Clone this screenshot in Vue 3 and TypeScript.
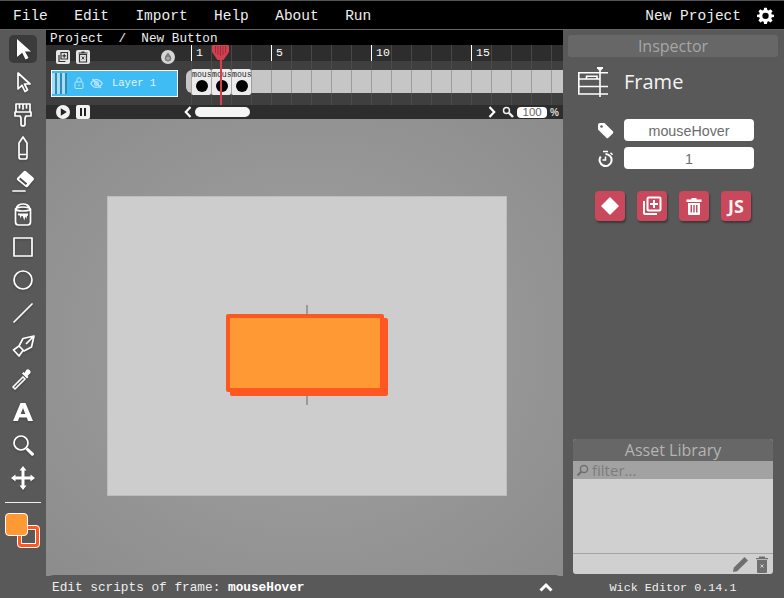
<template>
  <div class="editor">
    <header class="menubar">
      <nav class="menu">
        <span v-for="item in menuItems" :key="item">{{ item }}</span>
      </nav>
      <div class="project">
        <span>New Project</span>
        <svg width="17" height="17" viewBox="0 0 24 24">
          <path fill="#fff" fill-rule="evenodd" d="M10 1h4l.6 3.2 1.900.8 2.700-1.900 2.800 2.800-1.900 2.700.8 1.900L24 11v3l-3.100.6-.8 1.900 1.900 2.700-2.800 2.800-2.700-1.900-1.900.8L14 23.900h-4l-.6-3.100-1.900-.8-2.700 1.900-2.800-2.800 1.900-2.700-.8-1.900L0 14v-3l3.100-.5.8-1.900-1.900-2.700 2.800-2.800 2.700 1.900 1.900-.8zM12 8a4.500 4.500 0 1 0 0 9 4.500 4.500 0 0 0 0-9z" />
        </svg>
      </div>
    </header>

    <div class="workspace">
      <aside class="toolbar">
        <button v-for="tool in tools" :key="tool.name" class="tool" :class="{ active: tool.name === 'cursor' }">
          <svg width="26" height="26" viewBox="0 0 26 26" fill="none" stroke="#fff" stroke-width="1.700" stroke-linejoin="round" stroke-linecap="round">
            <path v-for="(d, i) in tool.outline" :key="i" :d="d" />
            <path v-for="(d, i) in tool.solid" :key="'s' + i" :d="d" fill="#fff" stroke="none" fill-rule="evenodd" />
          </svg>
        </button>
        <div class="tool-divider"></div>
        <div class="swatches">
          <div class="swatch stroke"></div>
          <div class="swatch fill"></div>
        </div>
      </aside>

      <main class="center">
        <div class="breadcrumb">Project&nbsp;&nbsp;/&nbsp;&nbsp;New Button</div>
        <section class="timeline">
          <div class="layers">
            <div class="layer-actions">
              <svg width="14" height="14" viewBox="0 0 14 14">
                <rect width="14" height="14" rx="2" fill="#e6e6e6" />
                <path d="M5 2.500h6.500V9H5zM3 5v6.500h6.500" fill="none" stroke="#333" stroke-width="1.200" />
                <path d="M8.200 3.800v4M6.300 5.800h3.800" stroke="#333" stroke-width="1.200" />
              </svg>
              <svg width="14" height="14" viewBox="0 0 14 14">
                <rect width="14" height="14" rx="2" fill="#e6e6e6" />
                <path d="M3.500 4.500h7V12h-7zM2.500 3h9M5.500 2h3" fill="none" stroke="#333" stroke-width="1.200" />
                <path d="M5.800 6.500l2.400 3M8.200 6.500l-2.400 3" stroke="#333" stroke-width="1" />
              </svg>
              <svg class="onion" width="14" height="14" viewBox="0 0 14 14">
                <circle cx="7" cy="7" r="7" fill="#d6d6d6" />
                <path d="M7 2.500c1.600 2.200 3.300 3.800 3.300 5.800a3.300 3.300 0 0 1-6.600 0c0-2 1.700-3.600 3.300-5.800z" fill="#7d7d7d" />
                <circle cx="7" cy="8.500" r="1.800" fill="#a8a8a8" />
              </svg>
            </div>
            <div class="layer-row">
              <div class="layer">
                <span class="grip"><i></i><i></i><i></i></span>
                <svg width="10" height="12" viewBox="0 0 10 12" fill="none" stroke="#b9e6fb" stroke-width="1">
                  <rect x="1" y="5" width="8" height="6.500" rx="1" />
                  <path d="M2.800 5V3a2.200 2.200 0 0 1 4.400 0v2M5 7.500v1.500" />
                </svg>
                <svg width="13" height="11" viewBox="0 0 13 11" fill="none" stroke="#b9e6fb" stroke-width="1.300">
                  <path d="M.8 5.500C2.500 2.800 4.300 1.600 6.500 1.600s4 1.200 5.700 3.900c-1.700 2.700-3.500 3.900-5.700 3.900S2.500 8.200.8 5.500z" />
                  <circle cx="6.500" cy="5.500" r="1.800" />
                  <path d="M2.500 1l8.500 9" />
                </svg>
                <span class="layer-name">Layer 1</span>
              </div>
            </div>
            <div class="transport">
              <svg width="14" height="14" viewBox="0 0 14 14">
                <circle cx="7" cy="7" r="7" fill="#f2f2f2" />
                <path d="M4.800 3.300L10.800 7l-6 3.700z" fill="#222" />
              </svg>
              <svg width="14" height="14" viewBox="0 0 14 14">
                <rect width="14" height="14" rx="2" fill="#f2f2f2" />
                <path d="M4 3h2v8H4zM8 3h2v8H8z" fill="#222" />
              </svg>
            </div>
          </div>

          <div class="frames">
            <div class="ruler">
              <span v-for="n in cellCount" :key="n" class="tick" :class="{ major: n === 1 || n % 5 === 0 }">
                <b v-if="n === 1 || n % 5 === 0">{{ n }}</b>
              </span>
            </div>
            <div class="track spacer"><span v-for="n in cellCount" :key="n"></span></div>
            <div class="track-row">
              <div class="track-start"></div>
              <div class="track">
                <template v-for="n in cellCount" :key="n">
                  <div v-if="n <= 3" class="frame">
                    <em>mous</em>
                    <i></i>
                  </div>
                  <span v-else></span>
                </template>
              </div>
            </div>
            <div class="track spacer low"><span v-for="n in cellCount" :key="n"></span></div>
            <div class="scroller">
              <svg width="8" height="12" viewBox="0 0 8 12" fill="none" stroke="#fff" stroke-width="2.200"><path d="M6.500 1L1.800 6l4.700 5" /></svg>
              <div class="thumb"></div>
              <svg class="next" width="8" height="12" viewBox="0 0 8 12" fill="none" stroke="#fff" stroke-width="2.200"><path d="M1.500 1l4.700 5-4.700 5" /></svg>
              <svg class="zoom-icon" width="12" height="12" viewBox="0 0 12 12" fill="none" stroke="#f2f2f2"><circle cx="4.500" cy="4.500" r="3" stroke-width="1.500" /><path d="M7 7l4 4" stroke-width="2.400" /></svg>
              <div class="zoom-value">100</div>
              <span class="percent">%</span>
            </div>
            <div class="playhead">
              <svg width="17" height="15" viewBox="0 0 17 15">
                <path d="M0 1a1 1 0 0 1 1-1h15a1 1 0 0 1 1 1v6l-5.500 8h-6L0 7z" fill="#d33f4f" />
                <path d="M3.500 1v7M6 1v9M8.500 1v10M11 1v9M13.500 1v7" stroke="#96303c" stroke-width="1" />
              </svg>
              <div class="playhead-line"></div>
            </div>
          </div>
        </section>

        <section class="canvas">
          <div class="stage">
            <div class="cross"></div>
            <div class="shape-shadow"></div>
            <div class="shape"></div>
          </div>
        </section>

        <footer class="script-bar">
          <span>Edit scripts of frame: <b>mouseHover</b></span>
          <svg width="14" height="10" viewBox="0 0 14 10" fill="none" stroke="#fff" stroke-width="3"><path d="M1.500 8.500L7 3l5.500 5.500" /></svg>
        </footer>
      </main>

      <aside class="side">
        <h2 class="panel-title">Inspector</h2>
        <div class="inspector-head">
          <svg width="30" height="30" viewBox="0 0 30 30" fill="none" stroke="#fff" stroke-width="1.600">
            <path d="M0 5.800h30M0 12h22M0 19.500h30M0 27h30M.8 5v22.800M22 2v28M8.500 12V9.200h10.500V12" />
            <path d="M19 0h6v1.200l-2 2.300h-2l-2-2.300z" fill="#fff" stroke="none" />
          </svg>
          <span>Frame</span>
        </div>
        <div class="field">
          <svg width="17" height="17" viewBox="0 0 17 17"><path d="M1 3a2 2 0 0 1 2-2h4.500l8.300 8.300a1.500 1.500 0 0 1 0 2.100l-4.400 4.400a1.500 1.500 0 0 1-2.100 0L1 7.500z" fill="#fff" /><circle cx="4.500" cy="4.500" r="1.300" fill="#595959" /></svg>
          <div class="value">mouseHover</div>
        </div>
        <div class="field">
          <svg width="17" height="17" viewBox="0 0 17 17" fill="none" stroke="#fff"><path d="M3.700 6.500a6 6 0 1 0 4.800-2.500" stroke-width="2" /><path d="M6 1.500h5M8.500 6.500V10H5.500M13.500 2.800l2 2" stroke-width="1.500" /></svg>
          <div class="value">1</div>
        </div>
        <div class="actions">
          <button class="action">
            <svg width="20" height="20" viewBox="0 0 20 20"><path d="M10 2L18 10 10 18 2 10z" fill="#fff" stroke="#fff" stroke-width="1.500" stroke-linejoin="round" /></svg>
          </button>
          <button class="action">
            <svg width="20" height="20" viewBox="0 0 20 20" fill="none" stroke="#fff" stroke-width="2">
              <path d="M2 5v12a1 1 0 0 0 1 1h12" />
              <rect x="5.500" y="1.500" width="13" height="13" rx="1" />
              <path d="M12 4v8M8 8h8" />
            </svg>
          </button>
          <button class="action">
            <svg width="20" height="20" viewBox="0 0 20 20"><path fill="#fff" fill-rule="evenodd" d="M2.500 3.500h5V2h5v1.500h5V6h-15zM4 7h12v11a1 1 0 0 1-1 1H5a1 1 0 0 1-1-1zM6.500 9v7.500H8V9zM9.300 9v7.500h1.400V9zM12 9v7.500h1.500V9z" /></svg>
          </button>
          <button class="action js">JS</button>
        </div>

        <section class="assets">
          <h2 class="panel-title asset-title">Asset Library</h2>
          <div class="filter">
            <svg width="13" height="13" viewBox="0 0 13 13" fill="none" stroke="#6f6f6f"><circle cx="8" cy="5" r="3.600" stroke-width="1.500" /><path d="M5.300 7.700L1.500 11.500" stroke-width="2.200" /></svg>
            <span>filter...</span>
          </div>
          <div class="asset-list"></div>
          <div class="asset-footer">
            <svg width="17" height="17" viewBox="0 0 17 17"><path d="M12.500 1l3.500 3.500L5.200 15.300 1 16l.7-4.200z" fill="#6f6f6f" /></svg>
            <svg width="12" height="17" viewBox="0 0 12 17"><path d="M1 4h10v12a1 1 0 0 1-1 1H2a1 1 0 0 1-1-1zM0 2h12v1.200H0zM3 .5h6V2H3z" fill="#6f6f6f" /><path d="M4.500 8.500l3 3M7.500 8.500l-3 3" stroke="#cfcfcf" stroke-width="1" /></svg>
          </div>
        </section>
        <div class="version">Wick Editor 0.14.1</div>
      </aside>
    </div>
  </div>
</template>

<script setup lang="ts">
interface Tool {
  name: string;
  outline?: string[];
  solid?: string[];
}

const menuItems = ['File', 'Edit', 'Import', 'Help', 'About', 'Run'];
const cellCount = 19;

const tools: Tool[] = [
  { name: 'cursor', solid: ['M7 3l14 12.500h-6l3.500 6.500-3 1.500-3.300-6.700L7 21z'] },
  { name: 'path-cursor', outline: ['M8 4l12 11h-5.500l3 6-2.500 1.500-3-6.200L8 20z'] },
  { name: 'brush', outline: ['M6 2h14v8H6zM5 10h16v4h-5l-1 2v6a2 2 0 0 1-4 0v-6l-1-2H5zM9.500 2v4M13 2v5M16.500 2v4'] },
  { name: 'pencil', outline: ['M9 8l4-6 4 6v14a2 2 0 0 1-2 2h-4a2 2 0 0 1-2-2zM9 19.500h8'] },
  { name: 'eraser', outline: ['M3 23h12'], solid: ['M13.500 3.500a2 2 0 0 1 2.800 0l7 6a2 2 0 0 1 0 2.800L18 18.500a2 2 0 0 1-2.800 0l-7.700-6.200a2 2 0 0 1 0-2.800zM9 11.200l6.800 5.800 1.400-1.500-6.800-5.800z'] },
  { name: 'bucket', outline: ['M6.500 7.500a6.500 4.500 0 0 1 13 0M5.500 8a7.500 2 0 0 0 15 0v13a3 3 0 0 1-3 3h-9a3 3 0 0 1-3-3zM5.500 8a7.500 2 0 0 1 15 0'], solid: ['M8 12.500h10v2l-1 .5-.6 3-1.100-2.500-1 4-1.600-4.500-1.400.2-.6 2.300-1-3-1.700-.3z'] },
  { name: 'rectangle', outline: ['M4 4h18v18H4z'] },
  { name: 'ellipse', outline: ['M13 4a9 9 0 1 0 0 18 9 9 0 0 0 0-18z'] },
  { name: 'line', outline: ['M4 22L22 4'] },
  { name: 'pen', outline: ['M24 3L13 5.500 9 13l5 5 7.500-4zM24 3l-7.500 7.500M9 13l-5.500 4L9 23l4-5.500'] },
  { name: 'dropper', outline: ['M5 23l-2-2 10-10 2 2z'], solid: ['M16 4.500a2.500 2.500 0 0 1 4 3l-2.500 2.500 1 1-1.500 1.500-5-5L13.500 6l1 1z'] },
  { name: 'text', solid: ['M10.500 4h5L23 22h-5l-1.200-3.500H9.200L8 22H3zM13 9l-2.300 6h4.600z'] },
  { name: 'zoom', outline: ['M11 4a7 7 0 1 0 0 14 7 7 0 0 0 0-14z'], solid: ['M15.500 17.500l2-2 6 5.500a1.500 1.500 0 0 1-2.300 2.300z'] },
  { name: 'pan', solid: ['M13 1l3.500 4.500H14.500V11.500h6V9.500L25 13l-4.500 3.500v-2h-6v6h2L13 25l-3.500-4.500h2v-6h-6v2L1 13l4.500-3.500v2h6V5.500h-2z'] }
];
</script>

<style>
html,
body {
  margin: 0;
  background: #595959;
}
</style>

<style scoped>
.editor {
  width: 784px;
  height: 598px;
  display: flex;
  flex-direction: column;
  overflow: hidden;
  background: #595959;
  font-family: "Liberation Mono", monospace;
  color: #fff;
}

.menubar {
  height: 27px;
  border-top: 1px solid #555;
  border-bottom: 1px solid #666;
  background: #000;
  display: flex;
  align-items: center;
  justify-content: space-between;
  padding: 1px 10px 0 13px;
  font-size: 14.500px;
  color: #eee;
  flex: none;
}

.menu {
  display: flex;
  gap: 26.400px;
}

.project {
  display: flex;
  align-items: center;
  gap: 16px;
}

.workspace {
  flex: 1;
  display: flex;
  min-height: 0;
}

.toolbar {
  width: 46px;
  flex: none;
  padding-top: 5px;
  display: flex;
  flex-direction: column;
  align-items: center;
  box-sizing: border-box;
}

.tool {
  width: 28px;
  height: 28px;
  padding: 0;
  margin-bottom: 5px;
  border: 0;
  border-radius: 5px;
  background: none;
  display: flex;
  align-items: center;
  justify-content: center;
}

.tool svg {
  filter: drop-shadow(0 1px 1px rgba(0, 0, 0, 0.25));
}

.tool.active {
  background: #3b3b3b;
}

.tool-divider {
  width: 36px;
  height: 1px;
  margin-top: 5px;
  background: #eee;
}

.swatches {
  width: 36px;
  height: 36px;
  margin-top: 10px;
  position: relative;
}

.swatch {
  position: absolute;
  width: 23px;
  height: 23px;
  box-sizing: border-box;
  border-radius: 4px;
}

.swatch.fill {
  left: 0;
  top: 0;
  background: #ff9933;
  border: 1px solid #fff;
}

.swatch.stroke {
  left: 12px;
  top: 12px;
  background: #595959;
  border: 4px solid #ff5722;
  outline: 1px solid #fff;
  outline-offset: -1px;
  box-shadow: inset 0 0 0 1px #fff;
}

.center {
  width: 517px;
  flex: none;
  display: flex;
  flex-direction: column;
}

.breadcrumb {
  height: 15px;
  line-height: 18px;
  padding-left: 4px;
  background: #000;
  font-size: 12.700px;
  flex: none;
  color: #eee;
}

.timeline {
  height: 74px;
  flex: none;
  display: flex;
  background: #3f3f3f;
}

.layers {
  width: 138px;
  flex: none;
  display: flex;
  flex-direction: column;
}

.layer-actions {
  height: 16px;
  box-sizing: border-box;
  background: #2d2d2d;
  display: flex;
  align-items: flex-start;
  gap: 6px;
  padding: 5px 0 0 10px;
}

.onion {
  margin-left: 65px;
}

.layer-row {
  height: 44px;
  display: flex;
  align-items: center;
  padding-left: 5px;
  box-sizing: border-box;
}

.layer {
  width: 127px;
  height: 27px;
  box-sizing: border-box;
  border: 1px solid #fff;
  background: #40bcf4;
  display: flex;
  align-items: center;
  gap: 6px;
  font-size: 10.500px;
  color: #e4f5fd;
}

.grip {
  display: flex;
  gap: 2px;
  width: 15px;
  height: 100%;
  margin-right: 1px;
  box-sizing: border-box;
  padding: 2px 0;
}

.grip i {
  width: 3px;
  background: #a7def7;
  box-shadow: 2px 0 0 #2f8ab4;
}

.layer-name {
  margin-left: 3px;
}

.transport {
  height: 14px;
  background: #2d2d2d;
  display: flex;
  align-items: center;
  gap: 6px;
  padding-left: 10px;
}

.frames {
  flex: 1;
  min-width: 0;
  position: relative;
  overflow: hidden;
}

.ruler {
  height: 16px;
  padding-left: 7px;
  background: #2d2d2d;
  display: flex;
}

.tick {
  width: 20px;
  flex: none;
  box-sizing: border-box;
  border-left: 1px solid #484848;
  font-size: 11.500px;
  line-height: 16px;
  white-space: nowrap;
}

.tick.major {
  border-left-color: #fff;
}

.tick b {
  font-weight: normal;
  padding-left: 4px;
}

.track {
  display: flex;
  flex: 1;
}

.track > span {
  width: 20px;
  flex: none;
  box-sizing: border-box;
  border-left: 1px solid #9c9c9c;
  background: #c6c6c6;
}

.spacer {
  height: 9px;
  padding-left: 7px;
}

.spacer.low {
  height: 12px;
}

.spacer > span {
  background: #3f3f3f;
  border-left-color: #4b4b4b;
}

.track-row {
  height: 23px;
  display: flex;
  position: relative;
}

.track-start {
  width: 6px;
  flex: none;
  margin: 0 -1px 0 2px;
  background: #c6c6c6;
  border-radius: 6px 0 0 6px;
}

.frame {
  width: 20px;
  height: 26px;
  margin-top: -1px;
  flex: none;
  box-sizing: border-box;
  border-left: 1px solid #a8a8a8;
  border-radius: 2px;
  background: #ececec;
  position: relative;
  z-index: 1;
}

.frame em {
  display: block;
  font: 8.200px/11px "Liberation Mono", monospace;
  color: #222;
  white-space: nowrap;
}

.frame i {
  position: absolute;
  left: 4px;
  top: 11px;
  width: 12px;
  height: 12px;
  border-radius: 50%;
  background: #000;
}

.scroller {
  height: 14px;
  background: #2d2d2d;
  display: flex;
  align-items: center;
  padding-right: 4px;
}

.scroller > svg:first-child {
  margin-right: 3px;
}

.thumb {
  width: 55px;
  height: 10px;
  border-radius: 5px;
  background: #f5f5f5;
}

.next {
  margin-left: auto;
}

.zoom-icon {
  margin-left: 6px;
}

.zoom-value {
  width: 30px;
  height: 11px;
  margin-left: 3px;
  border-radius: 4px;
  background: #fff;
  color: #666;
  font: 11.500px/11px "Liberation Sans", sans-serif;
  text-align: center;
}

.percent {
  margin-left: 3px;
  font: 700 10px "Liberation Sans", sans-serif;
  color: #ddd;
}

.playhead {
  position: absolute;
  left: 28px;
  top: 0;
  width: 17px;
  height: 60px;
  z-index: 2;
  display: flex;
  flex-direction: column;
  align-items: center;
}

.playhead svg {
  display: block;
  flex: none;
}

.playhead-line {
  width: 2px;
  flex: 1;
  background: #dc3d4e;
}

.canvas {
  flex: 1;
  min-height: 0;
  display: flex;
  justify-content: center;
  align-items: center;
  padding: 0 0 3px 5px;
  background: radial-gradient(ellipse at center, #a3a3a3 0%, #8c8c8c 100%);
}

.stage {
  width: 400px;
  height: 300px;
  box-sizing: border-box;
  border: 1px solid #bdbdbd;
  background: #cdcdcd;
  position: relative;
}

.cross {
  position: absolute;
  left: 198px;
  top: 108px;
  width: 2px;
  height: 100px;
  background: #9a9a9a;
}

.shape,
.shape-shadow {
  position: absolute;
  width: 158px;
  height: 78px;
  box-sizing: border-box;
  border-radius: 2px;
  background: #ff5722;
}

.shape-shadow {
  left: 122px;
  top: 121px;
}

.shape {
  left: 118px;
  top: 117px;
  background: #ff9933;
  border: 4px solid #ff5722;
}

.script-bar {
  height: 23px;
  box-sizing: border-box;
  flex: none;
  padding: 1px 10px 0 6px;
  display: flex;
  align-items: center;
  justify-content: space-between;
  border-radius: 8px 8px 0 0;
  font-size: 12.750px;
  color: #eee;
  margin-top: -1px;
  background: #595959;
  position: relative;
}

.script-bar b {
  color: #fff;
}

.side {
  flex: 1;
  min-width: 0;
  padding: 5px 1px 0 0;
  display: flex;
  flex-direction: column;
  align-items: center;
}

.panel-title {
  width: 210px;
  height: 22px;
  flex: none;
  margin: 0;
  border-radius: 3px;
  background: #676767;
  color: #a6a6a6;
  font: 400 16px/22px "Open Sans", sans-serif;
  text-align: center;
}

.inspector-head {
  align-self: flex-start;
  margin: 10px 0 0 15px;
  display: flex;
  align-items: center;
  gap: 16px;
  font: 400 20px/32px "Open Sans", sans-serif;
  height: 30px;
  color: #f4f4f4;
}

.field {
  align-self: flex-start;
  display: flex;
  align-items: center;
  gap: 10px;
  margin: 6px 0 0 34px;
}

.inspector-head + .field {
  margin-top: 22px;
}

.value {
  width: 130px;
  height: 22px;
  border-radius: 4px;
  background: #fff;
  color: #6c6c6c;
  font: 14.300px/24px "Liberation Sans", sans-serif;
  text-align: center;
}

.actions {
  align-self: flex-start;
  display: flex;
  gap: 12px;
  margin: 22px 0 0 32px;
}

.action {
  width: 30px;
  height: 30px;
  padding: 0;
  border: 0;
  border-radius: 4px;
  background: #c9485b;
  box-shadow: 1px 2px 2px rgba(0, 0, 0, 0.35);
  display: flex;
  align-items: center;
  justify-content: center;
}

.action.js {
  color: #f2f2f2;
  font: 700 18px "Open Sans", sans-serif;
}

.assets {
  width: 200px;
  margin-top: 218px;
  height: 135px;
  flex: none;
  display: flex;
  flex-direction: column;
  border-radius: 3px;
  overflow: hidden;
  background: #d0d0d0;
}

.asset-title {
  width: 100%;
  border-radius: 0;
  color: #b4b4b4;
}

.filter {
  height: 18px;
  flex: none;
  display: flex;
  align-items: center;
  gap: 3px;
  padding-left: 3px;
  background: #a2a2a2;
  color: #7c7c7c;
  font: 15px/18px "Open Sans", sans-serif;
}

.asset-list {
  flex: 1;
  border-bottom: 1px solid #a4a4a4;
}

.asset-footer {
  height: 20px;
  flex: none;
  display: flex;
  align-items: center;
  justify-content: flex-end;
  gap: 7px;
  padding-right: 5px;
}

.version {
  margin-top: 7px;
  font-size: 11.750px;
  color: #f0f0f0;
}
</style>
